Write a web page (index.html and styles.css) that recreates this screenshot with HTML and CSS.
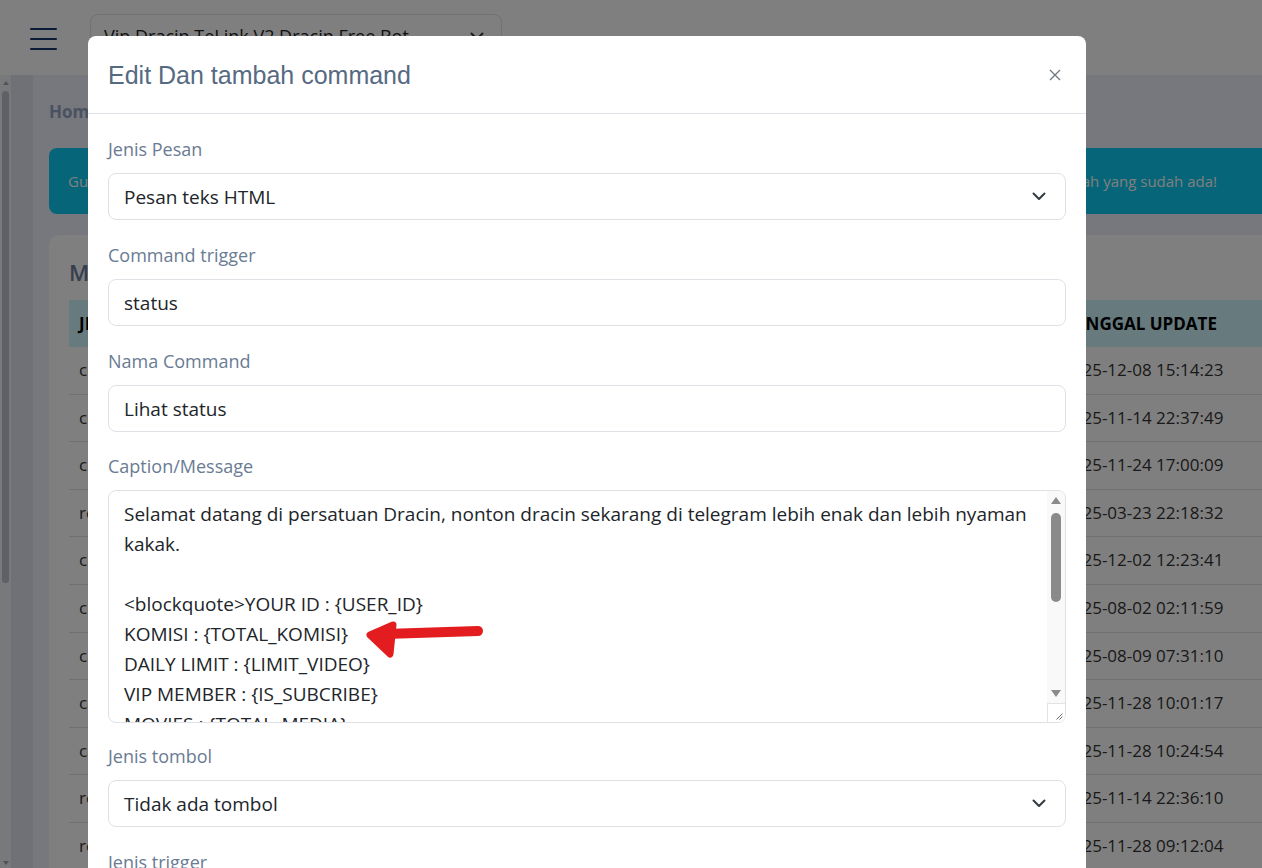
FILE: index.html
```html
<!DOCTYPE html>
<html lang="id">
<head>
<meta charset="utf-8">
<title>Edit Dan tambah command</title>
<link rel="stylesheet" href="styles.css">
</head>
<body>
<div class="page">
  <header class="topbar">
    <button class="burger" aria-label="Menu"><span></span><span></span><span></span></button>
    <div class="bot-select">
      <span>Vip Dracin TeLink V2 Dracin Free Bot</span>
      <svg class="chev-sm" viewBox="0 0 14 9" width="14" height="9"><path d="M1.5 1.5 L7 7 L12.5 1.5"/></svg>
    </div>
  </header>
  <div class="layout">
    <aside class="side">
      <div class="side-scroll">
        <span class="tri-up"></span>
        <span class="side-thumb"></span>
        <span class="side-fill"></span>
        <span class="tri-down"></span>
      </div>
    </aside>
    <main class="main">
      <nav class="crumb">Home / Command</nav>
      <div class="alert">
        <span>Gunakan halaman ini untuk mengatur command bot.</span>
        <span>Klik tombol tambah untuk membuat command baru atau ubah yang sudah ada!</span>
      </div>
      <section class="card">
        <h2 class="card-title">Manajemen Command</h2>
        <table class="list">
          <colgroup><col class="c1"><col class="c2"><col class="c3"><col class="c4"></colgroup>
          <thead>
            <tr><th>JENIS</th><th>COMMAND</th><th>NAMA COMMAND</th><th class="last">TANGGAL UPDATE</th></tr>
          </thead>
          <tbody>
            <tr><td>command</td><td>start</td><td>Mulai bot</td><td class="last">2025-12-08 15:14:23</td></tr>
            <tr><td>command</td><td>status</td><td>Lihat status</td><td class="last">2025-11-14 22:37:49</td></tr>
            <tr><td>command</td><td>vip</td><td>Beli VIP</td><td class="last">2025-11-24 17:00:09</td></tr>
            <tr><td>reply</td><td>bantuan</td><td>Bantuan</td><td class="last">2025-03-23 22:18:32</td></tr>
            <tr><td>command</td><td>komisi</td><td>Cek komisi</td><td class="last">2025-12-02 12:23:41</td></tr>
            <tr><td>command</td><td>referral</td><td>Link referral</td><td class="last">2025-08-02 02:11:59</td></tr>
            <tr><td>callback</td><td>menu</td><td>Menu utama</td><td class="last">2025-08-09 07:31:10</td></tr>
            <tr><td>callback</td><td>daftar</td><td>Daftar film</td><td class="last">2025-11-28 10:01:17</td></tr>
            <tr><td>callback</td><td>cari</td><td>Cari film</td><td class="last">2025-11-28 10:24:54</td></tr>
            <tr><td>reply</td><td>info</td><td>Info bot</td><td class="last">2025-11-14 22:36:10</td></tr>
            <tr><td>reply</td><td>kontak</td><td>Kontak admin</td><td class="last">2025-11-28 09:12:04</td></tr>
          </tbody>
        </table>
      </section>
    </main>
  </div>
</div>

<div class="backdrop"></div>

<div class="modal" role="dialog">
  <div class="modal-header">
    <h4 class="modal-title">Edit Dan tambah command</h4>
    <svg class="close" viewBox="0 0 12 12" width="12" height="12"><path d="M1 1 L11 11 M11 1 L1 11"/></svg>
  </div>
  <div class="modal-body">
    <div class="group">
      <label class="label">Jenis Pesan</label>
      <div class="control">
        <span>Pesan teks HTML</span>
        <svg class="chev" viewBox="0 0 14 9" width="14" height="9"><path d="M1.5 1.5 L7 7 L12.5 1.5"/></svg>
      </div>
    </div>
    <div class="group">
      <label class="label">Command trigger</label>
      <div class="control"><span>status</span></div>
    </div>
    <div class="group tight">
      <label class="label">Nama Command</label>
      <div class="control"><span>Lihat status</span></div>
    </div>
    <div class="group caption">
      <label class="label">Caption/Message</label>
      <div class="area">
        <div class="area-text">Selamat datang di persatuan Dracin, nonton dracin sekarang di telegram lebih enak dan lebih nyaman kakak.

&lt;blockquote&gt;YOUR ID : {USER_ID}
KOMISI : {TOTAL_KOMISI}
DAILY LIMIT : {LIMIT_VIDEO}
VIP MEMBER : {IS_SUBCRIBE}
MOVIES : {TOTAL_MEDIA}
&lt;/blockquote&gt;</div>
        <div class="area-scroll">
          <span class="sb-btn"><span class="tri-up big"></span></span>
          <span class="sb-thumb"></span>
          <span class="sb-fill"></span>
          <span class="sb-btn"><span class="tri-down big"></span></span>
          <span class="resizer"><svg viewBox="0 0 8 8" width="8" height="8"><path d="M7.5 1.5 L1.5 7.5 M7.5 4.5 L4.5 7.5"/></svg></span>
        </div>
        <svg class="mark" viewBox="365 619 120 40" width="120" height="40">
          <path class="mark-shaft" d="M477 631 L384 634"/>
          <path class="mark-head" d="M392 625 L369 635 L389 654 Z"/>
        </svg>
      </div>
    </div>
    <div class="group">
      <label class="label">Jenis tombol</label>
      <div class="control">
        <span>Tidak ada tombol</span>
        <svg class="chev" viewBox="0 0 14 9" width="14" height="9"><path d="M1.5 1.5 L7 7 L12.5 1.5"/></svg>
      </div>
    </div>
    <div class="group">
      <label class="label">Jenis trigger</label>
      <div class="control">
        <span>Command</span>
        <svg class="chev" viewBox="0 0 14 9" width="14" height="9"><path d="M1.5 1.5 L7 7 L12.5 1.5"/></svg>
      </div>
    </div>
  </div>
</div>
</body>
</html>
```

FILE: styles.css
```css
* { box-sizing: border-box; margin: 0; padding: 0; }

html, body {
  width: 1262px;
  height: 868px;
  overflow: hidden;
}

body {
  font-family: "Open Sans", "Noto Sans", sans-serif;
  background: #eef0fa;
  color: #333;
  position: relative;
}

/* ---------- background page ---------- */
.page {
  height: 868px;
  display: flex;
  flex-direction: column;
}

.topbar {
  height: 75px;
  flex: none;
  background: #fff;
  display: flex;
  align-items: flex-start;
  padding: 14px 0 0 30px;
}

.burger {
  width: 27px;
  height: 22px;
  margin-top: 14px;
  background: none;
  border: 0;
  display: flex;
  flex-direction: column;
  justify-content: space-between;
}

.burger span {
  display: block;
  height: 2px;
  background: #16346f;
  border-radius: 1px;
}

.bot-select {
  margin-left: 33px;
  width: 412px;
  height: 44px;
  border: 1px solid #e2e4e8;
  border-radius: 8px;
  display: flex;
  align-items: center;
  justify-content: space-between;
  padding: 0 17px 0 13px;
  font-size: 18px;
  color: #222;
}

.chev-sm path, .chev path {
  fill: none;
  stroke: #343a40;
  stroke-width: 2;
  stroke-linecap: round;
  stroke-linejoin: round;
}

.layout {
  flex: 1;
  display: flex;
  overflow: hidden;
}

.side {
  width: 33px;
  flex: none;
  background: #dfe2ec;
  display: flex;
}

.side-scroll {
  width: 11px;
  background: #f1f2f5;
  display: flex;
  flex-direction: column;
  align-items: center;
  padding: 3px 0 3px;
}

.tri-up {
  width: 0;
  height: 0;
  border-left: 3.5px solid transparent;
  border-right: 3.5px solid transparent;
  border-bottom: 4px solid #a3a6ad;
  margin-top: 3px;
}

.tri-down {
  width: 0;
  height: 0;
  border-left: 3.5px solid transparent;
  border-right: 3.5px solid transparent;
  border-top: 4px solid #a3a6ad;
}

.side-thumb {
  width: 7px;
  height: 492px;
  margin-top: 6px;
  background: #bcc0cc;
  border-radius: 4px;
}

.side-fill { flex: 1; }

.main {
  flex: 0 0 1260px;
  padding: 25px 0 0 16px;
}

.crumb {
  font-size: 17px;
  font-weight: 700;
  line-height: 24px;
  color: #94a4c2;
}

.alert {
  margin-top: 24px;
  height: 66px;
  background: #0dcaf0;
  border-radius: 8px;
  display: flex;
  align-items: center;
  justify-content: space-between;
  padding: 0 76px 0 19px;
  font-size: 15px;
  color: #fff;
}

.card {
  margin-top: 21px;
  background: #fff;
  border-radius: 10px;
  padding: 22px 0 0 20px;
  height: 700px;
}

.card-title {
  font-size: 22px;
  font-weight: 600;
  line-height: 30px;
  color: #6c7c9e;
  margin-bottom: 13px;
}

.list {
  border-collapse: collapse;
  table-layout: fixed;
  width: 1224px;
}

.list .c1 { width: 240px; }
.list .c2 { width: 300px; }
.list .c3 { width: 443px; }

.list th {
  background: #cff4fc;
  padding: 12px 10px;
  line-height: 23px;
  font-size: 17px;
  font-weight: 700;
  text-align: left;
  color: #000;
  white-space: nowrap;
  overflow: hidden;
}

.list td {
  padding: 12px 10px;
  line-height: 22.6px;
  font-size: 17px;
  color: #333;
  border-bottom: 1px solid #e0e0e0;
  white-space: nowrap;
  overflow: hidden;
}

.list td.last { padding-left: 11px; }
.list th.last { padding-left: 12px; }

/* ---------- modal ---------- */
.backdrop {
  position: fixed;
  inset: 0;
  background: rgba(0, 0, 0, 0.5);
}

.modal {
  position: absolute;
  top: 36px;
  left: 88px;
  width: 998px;
  height: 900px;
  background: #fff;
  border-radius: 8px;
}

.modal-header {
  height: 78px;
  border-bottom: 1px solid #dee2e6;
  display: flex;
  align-items: center;
  justify-content: space-between;
  padding: 1px 25px 0 20px;
}

.modal-title {
  font-family: "Liberation Sans", Arial, sans-serif;
  font-size: 25px;
  font-weight: 400;
  color: #566a82;
}

.close path {
  stroke: #6f767e;
  stroke-width: 1.3;
  fill: none;
}

.modal-body {
  padding: 22px 20px;
}

.group { margin-bottom: 22px; }
.group.tight { margin-bottom: 21px; }
.group.caption { margin-bottom: 20px; }

.label {
  display: block;
  font-size: 18px;
  line-height: 27px;
  color: #6a7b93;
  margin-bottom: 10px;
}

.control {
  height: 47px;
  border: 1px solid #dee2e6;
  border-radius: 8px;
  padding: 0 19px 0 15px;
  display: flex;
  align-items: center;
  justify-content: space-between;
  font-size: 19px;
  color: #212529;
}

.area {
  position: relative;
  height: 233px;
  border: 1px solid #dee2e6;
  border-radius: 8px;
  display: flex;
  overflow: hidden;
}

.area-text {
  flex: 1;
  padding: 8px 16px 0 15px;
  font-size: 19px;
  line-height: 30px;
  color: #212529;
  white-space: pre-wrap;
  overflow: hidden;
}

.area-scroll {
  width: 18px;
  flex: none;
  background: #f9f9f9;
  display: flex;
  flex-direction: column;
  align-items: center;
}

.sb-btn {
  height: 19px;
  width: 100%;
  display: flex;
  align-items: center;
  justify-content: center;
  flex: none;
}

.tri-up.big {
  border-left-width: 5.5px;
  border-right-width: 5.5px;
  border-bottom-width: 7px;
  border-bottom-color: #8a8a8a;
  margin-top: 0;
}

.tri-down.big {
  border-left-width: 5.5px;
  border-right-width: 5.5px;
  border-top-width: 7px;
  border-top-color: #8a8a8a;
}

.sb-thumb {
  width: 10px;
  height: 89px;
  margin-top: 3px;
  background: #8a8a8a;
  border-radius: 5px;
  flex: none;
}

.sb-fill { flex: 1; }

.resizer {
  height: 19px;
  width: 100%;
  flex: none;
  background: #fff;
  border-top: 1px solid #e3e3e3;
  border-left: 1px solid #e3e3e3;
  display: flex;
  align-items: flex-end;
  justify-content: flex-end;
  padding: 0 2px 2px 0;
}

.resizer path {
  stroke: #6f6f6f;
  stroke-width: 1;
  fill: none;
}

.mark {
  position: absolute;
  left: 257px;
  top: 128px;
}

.mark-shaft {
  fill: none;
  stroke: #e31c1f;
  stroke-width: 10;
  stroke-linecap: round;
}

.mark-head {
  fill: #e31c1f;
  stroke: #e31c1f;
  stroke-width: 7;
  stroke-linejoin: round;
}
```
